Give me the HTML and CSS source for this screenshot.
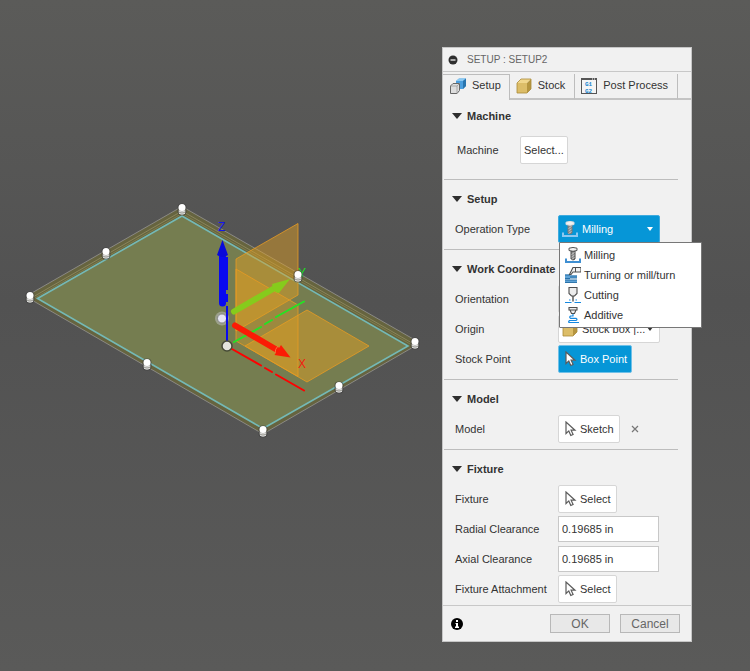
FILE: index.html
```html
<!DOCTYPE html>
<html lang="en">
<head>
  <meta charset="UTF-8" />
  <meta name="viewport" content="width=device-width, initial-scale=1" />
  <title>Setup : Setup2</title>
  <link rel="stylesheet" href="styles.css">
</head>
<body>
  <!-- shared icons -->
  <svg class="sprite" aria-hidden="true">
    <symbol id="cursor" viewBox="0 0 12 16">
      <path d="M1.500 1v11.500l2.800-2.600 2 4.600 2.300-1-2-4.300h3.900z" fill="#fff" stroke="#5c5c5c" stroke-width="1.200"/>
    </symbol>
    <symbol id="box" viewBox="0 0 16 16">
      <path d="M1 5l4-4h10l-4 4z" fill="#f0d68c"/>
      <path d="M11 5l4-4v10l-4 4z" fill="#b5953f"/>
      <path d="M1 5h10v10H1z" fill="#dcbd68"/>
      <path d="M1 5l4-4h10v10l-4 4H1z" fill="none" stroke="#a98a38" stroke-width=".8"/>
    </symbol>
    <symbol id="milling" viewBox="0 0 16 16">
      <path d="M1 11.500V15h14v-3.500" fill="none" stroke="var(--base, #3f8fd2)" stroke-width="2"/>
      <path d="M6 4h4v8q-2 2-4 0z" fill="#8c8c8c" stroke="var(--stem, #4a4a4a)"/>
      <path d="M6.500 7.500l3-2M6.500 10l3-2M6.500 12.500l3-2" stroke="#c8c8c8" stroke-width=".9"/>
      <path d="M4 1.200Q8-.3 12 1.200v2.300q-4 1.600-8 0z" fill="#f2f2f2" stroke="var(--edge, #555)"/>
    </symbol>
    <symbol id="turning" viewBox="0 0 16 16">
      <path d="M0 7.500h5v1h7v2.500H5v1H0zM0 12.500h5v.5h7v2.500H5v.5H0z" fill="#5fa3d6"/>
      <path d="M0 8h5M5 9h7M0 11.500h5M5 11h7M0 13h12M0 15.500h12" stroke="#236ca5" stroke-width=".9"/>
      <path d="M8 .5h8V5H8L6 7.500H4.500z" fill="#f2f2f2" stroke="#4f4f4f" stroke-width="1.100"/>
      <path d="M10.500 1v4" stroke="#4f4f4f"/>
    </symbol>
    <symbol id="cutting" viewBox="0 0 16 16">
      <path d="M4 .5h8v6L9.500 9h-3L4 6.500z" fill="#ececec" stroke="#4f4f4f" stroke-width="1.100"/>
      <path d="M8 9v5.500" stroke="#4f4f4f" stroke-width="1.400"/>
      <path d="M0 15.500h6.500M9.500 15.500H16M4 13h1.500M10.500 13H12" stroke="#1688df" stroke-width="1.200"/>
    </symbol>
    <symbol id="additive" viewBox="0 0 16 16">
      <path d="M4 .5h8V3H4zM5 3h6L9.500 6.500h-3z" fill="#ececec" stroke="#4f4f4f" stroke-width="1.100"/>
      <path d="M8 7v2H5.500q-1.500 1.200 0 2.400H11q2 1 0 2.100H4.500q-2 2 .5 2h9" fill="none" stroke="#1688df" stroke-width="1.200"/>
    </symbol>
    <symbol id="pin" viewBox="-6 -7 12 14">
      <rect x="-4.500" y="-5.500" width="9" height="12" rx="4" fill="#3c3c3c" opacity=".6"/>
      <rect x="-3.500" y="-1" width="7" height="6.500" rx="3" fill="#a2a29c"/>
      <path d="M-3 2.200q3 1.500 6 0M-3 4.400q3 1.500 6 0" fill="none" stroke="#e4e4e4" stroke-width=".9"/>
      <rect x="-3.500" y="-5" width="7" height="7" rx="3.500" fill="#fff"/>
    </symbol>
  </svg>

  <main class="workspace">
    <svg class="scene" viewBox="0 0 750 671" preserveAspectRatio="xMinYMin slice" aria-label="Stock preview">
      <!-- stock body -->
      <path d="M30 294L182 206.500 415 340v6l-152 88L30 299z" fill="#66643f" stroke="#8a8984"/>
      <path d="M33 297l149-86 230 132" fill="none" stroke="#8a865c"/>
      <path d="M35 298l147-84.500 229 131" fill="none" stroke="#807d4c"/>
      <path d="M37.500 298.500L182 216l226 130-145 82.500z" fill="#757d50" stroke="#74b9b6" stroke-width="1.600"/>

      <!-- green axis label sits behind its pin -->
      <text class="axis" x="298" y="277" fill="#1de01d">Y</text>

      <!-- origin planes -->
      <g fill="#e4a120" fill-opacity=".46" stroke="#e79b23" stroke-opacity=".8">
        <path d="M245 346l62-36 62 36-62 36z"/>
        <path d="M236 259l62-35.500V295l-62 36z"/>
        <path d="M236 269l62 36v71.500L236 341z" fill-opacity=".35"/>
      </g>

      <!-- Y -->
      <path d="M234 342l27-15M265 324l7-4M276 317l28-15.500" stroke="#23e323" stroke-width="2" stroke-linecap="round"/>
      <path d="M234 311.500l39-22.500" stroke="#86cb1c" stroke-width="6" stroke-linecap="round"/>
      <path d="M272 284l18-5-11 14q-6 0-7-9z" fill="#86cb1c"/>

      <!-- X -->
      <path d="M232 349l29 16.500M265 368l7 4M276 374.500l28 16" stroke="#f00" stroke-width="2" stroke-linecap="round"/>
      <path d="M235 325.500l43 25" stroke="#fb1b05" stroke-width="6" stroke-linecap="round"/>
      <path d="M281 345l9.500 12.500-16-2.500z" fill="#fb1b05"/>
      <path d="M278 346q-3 3-3 7" fill="none" stroke="#ff6c3c"/>
      <text class="axis" x="298" y="368" fill="#f02010">X</text>

      <!-- Z -->
      <circle cx="222" cy="318.500" r="7" fill="#b5b8b3" opacity=".6"/>
      <circle cx="222" cy="318.500" r="4.500" fill="#e6e6f2" stroke="#77797a" stroke-width=".8"/>
      <path d="M222.500 257v46" stroke="#0909ef" stroke-width="7" stroke-linecap="round"/>
      <path d="M227 257v33M227 294v8M227 306v37" stroke="#0909ef" stroke-width="2"/>
      <path d="M222.500 240l5.500 15q-5.500 4-11 0z" fill="#0909d9"/>
      <text class="axis" x="218" y="231" fill="#1414ee">Z</text>

      <circle cx="227" cy="346" r="5" fill="#e4e5dc" stroke="#464a36" stroke-width="1.500"/>

      <use href="#pin" x="176" y="202" width="12" height="14"/>
      <use href="#pin" x="100" y="246" width="12" height="14"/>
      <use href="#pin" x="24" y="290" width="12" height="14"/>
      <use href="#pin" x="141" y="357" width="12" height="14"/>
      <use href="#pin" x="257" y="424" width="12" height="14"/>
      <use href="#pin" x="333" y="380" width="12" height="14"/>
      <use href="#pin" x="409" y="336" width="12" height="14"/>
      <use href="#pin" x="292" y="269" width="12" height="14"/>
    </svg>

    <form class="dialog">
      <header class="title-bar">
        <svg class="collapse" viewBox="0 0 10 10"><circle cx="5" cy="5" r="4.500" fill="#2e2e2e"/><path d="M2.500 5h5" stroke="#fff" stroke-width="1.200"/></svg>
        <span>SETUP : SETUP2</span>
      </header>

      <nav class="tabs">
        <button type="button" class="tab active">
          <svg class="icon" viewBox="0 0 16 16">
            <path d="M6 3l3-2.500h7V8l-3 3H6z" fill="#4c9fde"/>
            <path d="M6 3l3-2.500h7L13 3z" fill="#8cc9f2"/>
            <path d="M13 3l3-2.500V8l-3 3z" fill="#2a75ae"/>
            <path d="M.5 8L3 5.500h6.500v7L7 15.500H.5z" fill="#dedede" stroke="#666"/>
            <path d="M.5 8H7v7.500M7 8l2.500-2.500" fill="none" stroke="#999" stroke-width=".8"/>
          </svg>
          Setup
        </button>
        <button type="button" class="tab">
          <svg class="icon"><use href="#box"/></svg>
          Stock
        </button>
        <button type="button" class="tab">
          <svg class="icon" viewBox="0 0 16 16">
            <rect x=".5" y=".5" width="15" height="15" fill="#f5f5f5" stroke="#555"/>
            <path d="M0 0h16v2H0z" fill="#555"/>
            <path d="M11 1h1M13 1h1" stroke="#fff"/>
            <text class="gcode" x="4" y="8">G1</text>
            <text class="gcode" x="4" y="15">G2</text>
          </svg>
          Post Process
        </button>
      </nav>

      <section class="group machine">
        <h2>Machine</h2>
        <div class="row">
          <label for="machine">Machine</label>
          <button type="button" class="btn" id="machine">Select...</button>
        </div>
      </section>

      <section class="group">
        <h2>Setup</h2>
        <div class="row">
          <label for="operation">Operation Type</label>
          <div class="dropdown open">
            <svg class="icon"><use href="#milling"/></svg>
            <select id="operation">
              <option>Milling</option>
              <option>Turning or mill/turn</option>
              <option>Cutting</option>
              <option>Additive</option>
            </select>
            <ul class="menu">
              <li><svg class="icon"><use href="#milling"/></svg>Milling</li>
              <li><svg class="icon"><use href="#turning"/></svg>Turning or mill/turn</li>
              <li><svg class="icon"><use href="#cutting"/></svg>Cutting</li>
              <li><svg class="icon"><use href="#additive"/></svg>Additive</li>
            </ul>
          </div>
        </div>
      </section>

      <section class="group">
        <h2>Work Coordinate</h2>
        <div class="row">
          <label for="orientation">Orientation</label>
          <div class="dropdown">
            <select id="orientation"></select>
          </div>
        </div>
        <div class="row">
          <label for="origin">Origin</label>
          <div class="dropdown">
            <svg class="icon"><use href="#box"/></svg>
            <select id="origin"><option>Stock box |...</option></select>
          </div>
        </div>
        <div class="row">
          <label for="stock-point">Stock Point</label>
          <button type="button" class="btn primary" id="stock-point"><svg class="cursor"><use href="#cursor"/></svg>Box Point</button>
        </div>
      </section>

      <section class="group">
        <h2>Model</h2>
        <div class="row">
          <label for="model">Model</label>
          <div class="picked">
            <button type="button" class="btn" id="model"><svg class="cursor"><use href="#cursor"/></svg>Sketch</button>
            <button type="button" class="clear" aria-label="Clear">
              <svg viewBox="0 0 8 8"><path d="M1 1l6 6M7 1L1 7" stroke="#777" stroke-width="1.200"/></svg>
            </button>
          </div>
        </div>
      </section>

      <section class="group last">
        <h2>Fixture</h2>
        <div class="row">
          <label for="fixture">Fixture</label>
          <button type="button" class="btn" id="fixture"><svg class="cursor"><use href="#cursor"/></svg>Select</button>
        </div>
        <div class="row">
          <label for="radial">Radial Clearance</label>
          <input type="text" id="radial" value="0.19685 in">
        </div>
        <div class="row">
          <label for="axial">Axial Clearance</label>
          <input type="text" id="axial" value="0.19685 in">
        </div>
        <div class="row">
          <label for="attachment">Fixture Attachment</label>
          <button type="button" class="btn" id="attachment"><svg class="cursor"><use href="#cursor"/></svg>Select</button>
        </div>
      </section>

      <footer class="actions">
        <svg class="info" viewBox="0 0 12 12"><circle cx="6" cy="6" r="6" fill="#000"/><path d="M5 2h2v2H5zM4.500 5H7v3.500h1V10H4V8.500h1V6h-.5z" fill="#fff"/></svg>
        <button type="button">OK</button>
        <button type="button">Cancel</button>
      </footer>
    </form>
  </main>
</body>
</html>
```

FILE: styles.css
```css
* {
  box-sizing: border-box;
}

body {
  margin: 0;
  font-family: "Liberation Sans", Arial, sans-serif;
  font-size: 11px;
  color: #333;
}

button,
input,
select {
  font: inherit;
  color: inherit;
}

.sprite {
  display: none;
}

.workspace {
  position: relative;
  display: flex;
  justify-content: flex-end;
  align-items: flex-start;
  min-height: 100vh;
  padding: 47px 58px 24px 24px;
  background: linear-gradient(#5b5b59, #525252 45%, #5a5a59);
}

/* 3D canvas lies under the dialog */
.scene {
  position: absolute;
  inset: 0;
  width: 100%;
  height: 100%;
}

.axis {
  font-size: 12px;
}

.dialog {
  position: relative;
  min-width: 250px;
  background: #f1f1f1;
  border: 1px solid #c6c6c6;
}

.title-bar {
  display: flex;
  align-items: center;
  gap: 9px;
  height: 24px;
  padding-left: 5px;
  border-bottom: 1px solid #c8c8c8;
  font-size: 10px;
  color: #666;
}

.collapse {
  width: 10px;
  height: 10px;
}

.tabs {
  display: flex;
  margin-top: 2px;
  height: 26px;
}

.tabs::after {
  content: "";
  flex: 1;
  border-bottom: 2px solid #c4c4c4;
}

.tab {
  display: flex;
  align-items: center;
  gap: 6px;
  padding: 0 9px 2px 6px;
  background: none;
  border: 0;
  border-right: 1px solid #bdbdbd;
  border-bottom: 2px solid #c4c4c4;
}

.tab.active {
  padding: 0 8px 5px 7px;
  border-top: 1px solid #bdbdbd;
  border-bottom: 0;
}

.icon {
  flex: none;
  width: 16px;
  height: 16px;
}

.tab .icon {
  margin-top: 2px;
}

.gcode {
  font: bold 6px "Liberation Mono", monospace;
  fill: #2086d0;
}

.group {
  margin: 0 13px 0 1px;
  padding: 4px 0 5px 11px;
  border-bottom: 1px solid #bdbdbd;
}

.group h2 {
  display: flex;
  align-items: center;
  gap: 5px;
  height: 30px;
  margin: 0 0 0 -3px;
  font-size: 11px;
}

.group h2::before {
  content: "";
  border: 5px solid transparent;
  border-top: 6px solid #2e2e2e;
  border-bottom: 0;
}

.row {
  display: grid;
  grid-template-columns: 103px 1fr;
  align-items: center;
  justify-items: start;
  height: 30px;
}

.machine {
  padding: 1px 0 10px 11px;
}

.machine .row {
  grid-template-columns: 63px 1fr;
  height: 38px;
  padding-left: 2px;
}

.group.last {
  padding-bottom: 1px;
  border-bottom: 0;
}

.btn {
  display: flex;
  align-items: center;
  gap: 3px;
  height: 28px;
  padding: 0 5px;
  background: #fff;
  border: 1px solid #d6d6d6;
  border-radius: 2px;
}

.machine .btn {
  padding: 0 3px;
}

.btn.primary {
  padding-right: 4px;
  background: #0696d7;
  border-color: #6fc0e8;
  color: #fff;
}

.cursor {
  width: 13px;
  height: 16px;
}

.picked {
  display: flex;
  align-items: center;
  gap: 11px;
}

.clear {
  display: flex;
  padding: 0;
  background: none;
  border: 0;
}

.clear svg {
  width: 8px;
  height: 8px;
}

.row input {
  width: 101px;
  height: 26px;
  padding: 0 3px;
  background: #fff;
  border: 1px solid #c8c8c8;
}

.dropdown {
  position: relative;
  width: 102px;
}

.dropdown select {
  display: block;
  width: 100%;
  height: 28px;
  padding: 0 12px 0 23px;
  appearance: none;
  background: #fff;
  border: 1px solid #d6d6d6;
  border-radius: 2px;
}

.dropdown > .icon {
  position: absolute;
  top: 6px;
  left: 4px;
}

.dropdown::after {
  content: "";
  position: absolute;
  top: 12px;
  right: 7px;
  border: 3px solid transparent;
  border-top: 4px solid #333;
  border-bottom: 0;
}

.dropdown.open select {
  background: #0696d7;
  border-color: #3fabdf;
  color: #fff;
}

.dropdown.open::after {
  border-top-color: #fff;
}

.dropdown.open > .icon {
  --base: #8cc8f0;
  --edge: #ddd;
  --stem: #777;
}

.menu {
  position: absolute;
  z-index: 1;
  top: 27px;
  left: 1px;
  min-width: 143px;
  margin: 0;
  padding: 2px 5px;
  list-style: none;
  background: #fff;
  border: 1px solid #777;
  border-radius: 1px;
}

.menu li {
  display: flex;
  align-items: center;
  gap: 3px;
  height: 20px;
  white-space: nowrap;
}

.actions {
  display: flex;
  align-items: center;
  gap: 10px;
  height: 36px;
  padding: 0 11px 0 8px;
  border-top: 1px solid #c8c8c8;
}

.actions .info {
  width: 12px;
  height: 12px;
  margin-right: auto;
}

.actions button {
  width: 60px;
  height: 19px;
  padding: 0;
  background: #e8e8e8;
  border: 1px solid #b8b8b8;
  font-size: 12px;
  color: #666;
}
```
